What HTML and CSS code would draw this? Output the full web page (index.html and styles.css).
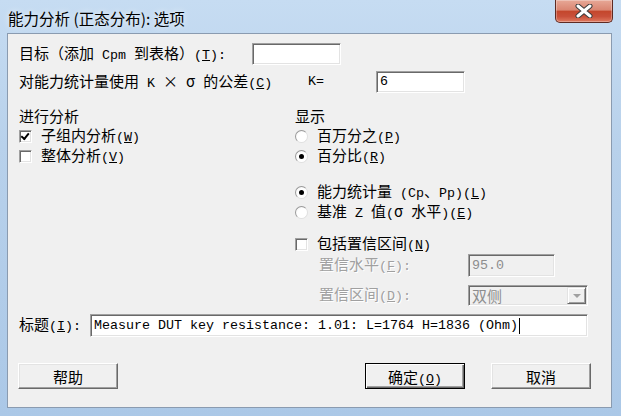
FILE: index.html
```html
<!DOCTYPE html>
<html lang="zh-CN">
<head>
    <meta charset="UTF-8">
    <title>能力分析 (正态分布): 选项</title>
    <link rel="stylesheet" href="styles.css">
</head>
<body>
    <div class="window">
        <div class="titlebar">
            <div class="caption">能力分析 (正态分布): 选项</div>
            <div class="close">
                <svg width="20" height="14" viewBox="0 0 20 14">
                    <path d="M4 2 L16 12 M16 2 L4 12" stroke="#3a3a3a" stroke-width="5" stroke-linecap="round"/>
                    <path d="M4 2 L16 12 M16 2 L4 12" stroke="#ffffff" stroke-width="3" stroke-linecap="round"/>
                </svg>
            </div>
        </div>
        <div class="client">
            <div class="row row-target">
                <label class="lbl-target">目标（添加<span class="h"> Cpm </span>到表格）<span class="h">(<u>T</u>):</span></label>
                <div class="edit w-target"></div>
            </div>
            <div class="row row-k">
                <label class="lbl-k">对能力统计量使用<span class="h"> K </span>×<span class="h"> </span>σ<span class="h"> </span>的公差<span class="h">(<u>C</u>)</span></label>
                <span class="h k-eq">K=</span>
                <div class="edit w-k"><span class="h">6</span></div>
            </div>
            <div class="groups">
                <div class="col col-left">
                    <div class="hdr">进行分析</div>
                    <div class="opt"><span class="check on"></span><span class="txt">子组内分析<span class="h">(<u>W</u>)</span></span></div>
                    <div class="opt"><span class="check"></span><span class="txt">整体分析<span class="h">(<u>V</u>)</span></span></div>
                </div>
                <div class="col col-right">
                    <div class="hdr">显示</div>
                    <div class="opt"><span class="radio"></span><span class="txt">百万分之<span class="h">(<u>P</u>)</span></span></div>
                    <div class="opt"><span class="radio on"></span><span class="txt">百分比<span class="h">(<u>R</u>)</span></span></div>
                    <div class="opt gap"><span class="radio on"></span><span class="txt">能力统计量<span class="h"> (Cp</span>、<span class="h">Pp)(<u>L</u>)</span></span></div>
                    <div class="opt"><span class="radio"></span><span class="txt">基准<span class="h"> Z </span>值<span class="h">(</span>σ<span class="h"> </span>水平<span class="h">)(<u>E</u>)</span></span></div>
                    <div class="opt ci"><span class="check"></span><span class="txt">包括置信区间<span class="h">(<u>N</u>)</span></span></div>
                    <div class="sub sub-level">
                        <span class="dim">置信水平<span class="h">(<u>F</u>):</span></span>
                        <div class="edit disabled w-level"><span class="h">95.0</span></div>
                    </div>
                    <div class="sub sub-side">
                        <span class="dim">置信区间<span class="h">(<u>D</u>):</span></span>
                        <div class="combo">
                            <span class="combo-text">双侧</span>
                            <span class="drop"><span class="arrow"></span></span>
                        </div>
                    </div>
                </div>
            </div>
            <div class="row row-title">
                <label class="lbl-title">标题<span class="h">(<u>I</u>):</span></label>
                <div class="edit w-title"><span class="h">Measure DUT key resistance: 1.01: L=1764 H=1836 (Ohm)</span><span class="caret"></span></div>
            </div>
            <div class="buttons">
                <button class="btn btn-help">帮助</button>
                <button class="btn default">确定<span class="h">(<u>O</u>)</span></button>
                <button class="btn btn-cancel">取消</button>
            </div>
        </div>
    </div>
</body>
</html>
```
FILE: styles.css
```css
/* Base */
body {
    margin: 0;
    padding: 0;
    background-color: #a9c6e6;
}

.h {
    font-family: "Liberation Mono", monospace;
    font-size: 13.33px;
}

/* Window frame */
.window {
    width: 621px;
    height: 416px;
    box-sizing: border-box;
    padding: 0 9px 8px 7px;
    display: flex;
    flex-direction: column;
    background: linear-gradient(180deg, #c6dcf2 0%, #b8d1eb 35%, #abc8e7 100%);
}

.titlebar {
    height: 33px;
    display: flex;
    justify-content: space-between;
    align-items: flex-start;
}

.caption {
    margin: 8px 0 0 1px;
    font-family: "Noto Sans CJK SC", sans-serif;
    font-size: 15.5px;
    line-height: 20px;
    color: #000;
    text-shadow: 0 0 6px rgba(255, 255, 255, 0.9);
}

.close {
    width: 58px;
    height: 23px;
    margin-right: -1px;
    box-sizing: border-box;
    border: 1px solid #5e2a22;
    border-top: none;
    border-radius: 0 0 5px 5px;
    background: linear-gradient(180deg, #e7a897 0%, #da8672 45%, #c4472d 52%, #c9503a 75%, #df7a60 100%);
    box-shadow: inset 0 0 0 1px rgba(255, 255, 255, 0.3);
    display: flex;
    align-items: center;
    justify-content: center;
}

/* Client area */
.client {
    flex: 1;
    background-color: #f0f0f0;
    border: 1px solid #8a9bb0;
    padding: 0 0 0 11px;
    font-family: "Noto Sans CJK SC", sans-serif;
    font-size: 15px;
    line-height: 18px;
    color: #000;
}

.txt {
    white-space: pre;
}

.row {
    display: flex;
    align-items: center;
}

.row-target {
    margin-top: 9px;
    height: 22px;
}

.lbl-target {
    width: 233px;
}

.row-k {
    margin-top: 6px;
    height: 22px;
}

.lbl-k {
    width: 289px;
}

.k-eq {
    width: 68px;
}

/* Edit boxes */
.edit {
    box-sizing: border-box;
    background-color: #fff;
    border: 1px solid;
    border-color: #a0a0a0 #fff #fff #a0a0a0;
    box-shadow: inset 1px 1px #696969, inset -1px -1px #e3e3e3;
    display: flex;
    align-items: center;
    padding-left: 3px;
}

.w-target {
    width: 89px;
    height: 22px;
}

.w-k {
    width: 89px;
    height: 22px;
}

.edit.disabled {
    background-color: #f0f0f0;
    color: #8d8d8d;
}

.w-level {
    width: 87px;
    height: 23px;
}

/* Option groups */
.groups {
    display: flex;
    margin-top: 13px;
}

.col-left {
    width: 276px;
}

.col-right {
    flex: 1;
}

.hdr,
.opt {
    height: 20px;
    display: flex;
    align-items: center;
}

.opt.gap {
    margin-top: 16px;
}

.opt.ci {
    margin-top: 12px;
}

.check {
    width: 13px;
    height: 13px;
    box-sizing: border-box;
    margin-right: 9px;
    background-color: #fff;
    border: 1px solid;
    border-color: #a0a0a0 #fff #fff #a0a0a0;
    box-shadow: inset 1px 1px #696969, inset -1px -1px #e3e3e3;
    position: relative;
}

.check.on::after {
    content: "";
    position: absolute;
    left: 3px;
    top: 1px;
    width: 3px;
    height: 6px;
    border: solid #000;
    border-width: 0 2px 2px 0;
    transform: rotate(40deg);
    transform-origin: 60% 40%;
}

.radio {
    width: 13px;
    height: 13px;
    box-sizing: border-box;
    margin-right: 9px;
    border-radius: 50%;
    background: radial-gradient(circle at 60% 60%, #fff 55%, #e6e6e6 100%);
    border: 1px solid #9a9a9a;
    border-right-color: #e0e0e0;
    border-bottom-color: #e0e0e0;
    display: flex;
    align-items: center;
    justify-content: center;
}

.radio.on::after {
    content: "";
    width: 5px;
    height: 5px;
    border-radius: 50%;
    background-color: #000;
}

.sub {
    display: flex;
    align-items: center;
    padding-left: 24px;
}

.sub-level {
    height: 23px;
}

.sub-side {
    margin-top: 8px;
    height: 21px;
}

.dim {
    width: 149px;
    color: #a0a0a0;
    text-shadow: 1px 1px #fff;
}

/* Combo box */
.combo {
    width: 120px;
    height: 21px;
    box-sizing: border-box;
    background-color: #f0f0f0;
    border: 1px solid;
    border-color: #a0a0a0 #fff #fff #a0a0a0;
    box-shadow: inset 1px 1px #696969, inset -1px -1px #e3e3e3;
    display: flex;
    align-items: center;
    justify-content: space-between;
    padding: 0 1px 0 3px;
}

.combo-text {
    color: #8d8d8d;
}

.drop {
    width: 19px;
    height: 17px;
    box-sizing: border-box;
    background-color: #f0f0f0;
    border: 1px solid;
    border-color: #e3e3e3 #696969 #696969 #e3e3e3;
    box-shadow: inset 1px 1px #fff, inset -1px -1px #a0a0a0;
    display: flex;
    align-items: center;
    justify-content: center;
}

.arrow {
    width: 0;
    height: 0;
    border-left: 4px solid transparent;
    border-right: 4px solid transparent;
    border-top: 4px solid #a0a0a0;
}

/* Title row */
.row-title {
    margin-top: 8px;
    height: 23px;
}

.lbl-title {
    width: 71px;
}

.w-title {
    width: 498px;
    height: 23px;
}

.caret {
    width: 1px;
    height: 16px;
    background-color: #000;
    margin-left: 1px;
}

/* Buttons */
.buttons {
    display: flex;
    margin: 26px 0 0 -1px;
}

.btn {
    width: 100px;
    height: 26px;
    padding: 0;
    box-sizing: border-box;
    font-family: "Noto Sans CJK SC", sans-serif;
    font-size: 15px;
    color: #000;
    background-color: #f0f0f0;
    border: 1px solid;
    border-color: #fff #696969 #696969 #fff;
    box-shadow: inset -1px -1px #a0a0a0, inset 1px 1px #e3e3e3;
}

.btn.default {
    margin-left: auto;
    border-color: #000;
    box-shadow: inset 1px 1px #fff, inset -1px -1px #696969, inset -2px -2px #a0a0a0;
}

.btn-cancel {
    margin: 0 20px 0 26px;
}
```
